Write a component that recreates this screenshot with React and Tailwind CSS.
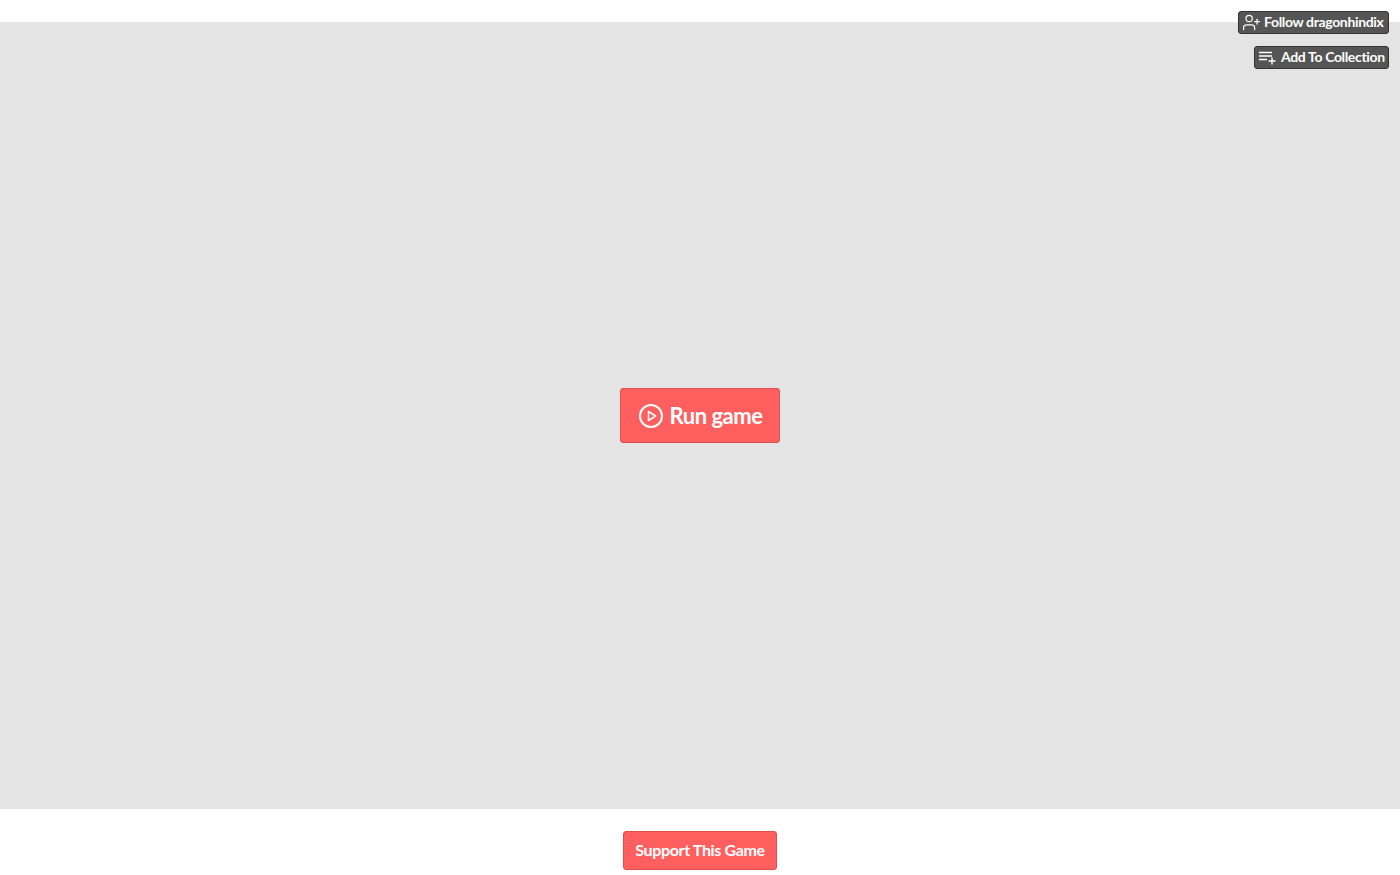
import { UserPlus } from "lucide-react";

const PlaylistIcon = () => (
  <svg width="18" height="14" viewBox="0 0 18 14" fill="none" stroke="currentColor" strokeWidth="1.4">
    <path d="M0 1.5h13M0 5h13M0 8.5h8M13 6.5v7M9.5 10h7" />
  </svg>
);

const PlayIcon = () => (
  <svg width="26" height="26" viewBox="0 0 26 26" fill="none" stroke="currentColor">
    <circle cx="13" cy="13" r="11" strokeWidth="2" />
    <path d="M10.5 8.5l7 4.5-7 4.5z" strokeWidth="1.5" strokeLinejoin="round" />
  </svg>
);

const overlayBtn =
  "flex h-[23px] items-center whitespace-nowrap rounded-[3px] border border-[#333333] bg-[#555555] text-[14px] font-bold tracking-[-0.35px] text-white";

export default function App() {
  return (
    <div className="flex h-[875px] flex-col overflow-hidden bg-white font-['Lato',sans-serif]">
      <div className="relative mt-[22px] flex h-[787px] items-center justify-center bg-[#e4e4e4]">
        <div className="absolute right-[11px] top-[-11px] flex flex-col items-end gap-3">
          <button className={`${overlayBtn} w-[151px] pl-[3px]`}>
            <UserPlus size={19} strokeWidth={1.5} className="mr-[3px]" />
            <span className="mb-[2px]">Follow dragonhindix</span>
          </button>
          <button className={`${overlayBtn} w-[135px] pl-[4px]`}>
            <PlaylistIcon />
            <span className="mb-[2px] ml-[4px]">Add To Collection</span>
          </button>
        </div>
        <button className="flex h-[55px] w-[160px] items-center justify-center gap-[6px] rounded-[3px] border border-[#e04f4f] bg-[#ff5f5f] text-[22px] font-bold tracking-[-0.5px] text-white">
          <PlayIcon />
          Run game
        </button>
      </div>
      <div className="flex flex-1 justify-center pt-[22px]">
        <button className="h-[39px] w-[154px] rounded-[3px] border border-[#e04f4f] bg-[#ff5f5f] pb-[2px] text-[16px] font-bold tracking-[-0.35px] text-white">
          Support This Game
        </button>
      </div>
    </div>
  );
}
